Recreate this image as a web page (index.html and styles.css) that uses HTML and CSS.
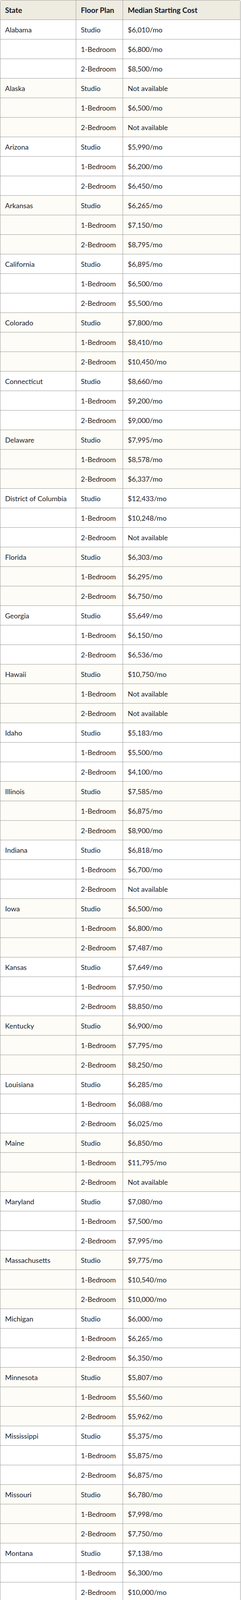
FILE: index.html
```html
<!DOCTYPE html>
<html lang="en">
<head>
<meta charset="utf-8">
<title>Median Starting Cost by State</title>
<link rel="stylesheet" href="styles.css">
</head>
<body>
<table class="cost-table">
<thead>
<tr><th class="c-state">State</th><th class="c-plan">Floor Plan</th><th class="c-cost">Median Starting Cost</th></tr>
</thead>
<tbody>
<tr><td>Alabama</td><td>Studio</td><td>$6,010/mo</td></tr>
<tr><td></td><td>1-Bedroom</td><td>$6,800/mo</td></tr>
<tr><td></td><td>2-Bedroom</td><td>$8,500/mo</td></tr>
<tr class="alt"><td>Alaska</td><td>Studio</td><td>Not available</td></tr>
<tr class="alt"><td></td><td>1-Bedroom</td><td>$6,500/mo</td></tr>
<tr class="alt"><td></td><td>2-Bedroom</td><td>Not available</td></tr>
<tr><td>Arizona</td><td>Studio</td><td>$5,990/mo</td></tr>
<tr><td></td><td>1-Bedroom</td><td>$6,200/mo</td></tr>
<tr><td></td><td>2-Bedroom</td><td>$6,450/mo</td></tr>
<tr class="alt"><td>Arkansas</td><td>Studio</td><td>$6,265/mo</td></tr>
<tr class="alt"><td></td><td>1-Bedroom</td><td>$7,150/mo</td></tr>
<tr class="alt"><td></td><td>2-Bedroom</td><td>$8,795/mo</td></tr>
<tr><td>California</td><td>Studio</td><td>$6,895/mo</td></tr>
<tr><td></td><td>1-Bedroom</td><td>$6,500/mo</td></tr>
<tr><td></td><td>2-Bedroom</td><td>$5,500/mo</td></tr>
<tr class="alt"><td>Colorado</td><td>Studio</td><td>$7,800/mo</td></tr>
<tr class="alt"><td></td><td>1-Bedroom</td><td>$8,410/mo</td></tr>
<tr class="alt"><td></td><td>2-Bedroom</td><td>$10,450/mo</td></tr>
<tr><td>Connecticut</td><td>Studio</td><td>$8,660/mo</td></tr>
<tr><td></td><td>1-Bedroom</td><td>$9,200/mo</td></tr>
<tr><td></td><td>2-Bedroom</td><td>$9,000/mo</td></tr>
<tr class="alt"><td>Delaware</td><td>Studio</td><td>$7,995/mo</td></tr>
<tr class="alt"><td></td><td>1-Bedroom</td><td>$8,578/mo</td></tr>
<tr class="alt"><td></td><td>2-Bedroom</td><td>$6,337/mo</td></tr>
<tr><td>District of Columbia</td><td>Studio</td><td>$12,433/mo</td></tr>
<tr><td></td><td>1-Bedroom</td><td>$10,248/mo</td></tr>
<tr><td></td><td>2-Bedroom</td><td>Not available</td></tr>
<tr class="alt"><td>Florida</td><td>Studio</td><td>$6,303/mo</td></tr>
<tr class="alt"><td></td><td>1-Bedroom</td><td>$6,295/mo</td></tr>
<tr class="alt"><td></td><td>2-Bedroom</td><td>$6,750/mo</td></tr>
<tr><td>Georgia</td><td>Studio</td><td>$5,649/mo</td></tr>
<tr><td></td><td>1-Bedroom</td><td>$6,150/mo</td></tr>
<tr><td></td><td>2-Bedroom</td><td>$6,536/mo</td></tr>
<tr class="alt"><td>Hawaii</td><td>Studio</td><td>$10,750/mo</td></tr>
<tr class="alt"><td></td><td>1-Bedroom</td><td>Not available</td></tr>
<tr class="alt"><td></td><td>2-Bedroom</td><td>Not available</td></tr>
<tr><td>Idaho</td><td>Studio</td><td>$5,183/mo</td></tr>
<tr><td></td><td>1-Bedroom</td><td>$5,500/mo</td></tr>
<tr><td></td><td>2-Bedroom</td><td>$4,100/mo</td></tr>
<tr class="alt"><td>Illinois</td><td>Studio</td><td>$7,585/mo</td></tr>
<tr class="alt"><td></td><td>1-Bedroom</td><td>$6,875/mo</td></tr>
<tr class="alt"><td></td><td>2-Bedroom</td><td>$8,900/mo</td></tr>
<tr><td>Indiana</td><td>Studio</td><td>$6,818/mo</td></tr>
<tr><td></td><td>1-Bedroom</td><td>$6,700/mo</td></tr>
<tr><td></td><td>2-Bedroom</td><td>Not available</td></tr>
<tr class="alt"><td>Iowa</td><td>Studio</td><td>$6,500/mo</td></tr>
<tr class="alt"><td></td><td>1-Bedroom</td><td>$6,800/mo</td></tr>
<tr class="alt"><td></td><td>2-Bedroom</td><td>$7,487/mo</td></tr>
<tr><td>Kansas</td><td>Studio</td><td>$7,649/mo</td></tr>
<tr><td></td><td>1-Bedroom</td><td>$7,950/mo</td></tr>
<tr><td></td><td>2-Bedroom</td><td>$8,850/mo</td></tr>
<tr class="alt"><td>Kentucky</td><td>Studio</td><td>$6,900/mo</td></tr>
<tr class="alt"><td></td><td>1-Bedroom</td><td>$7,795/mo</td></tr>
<tr class="alt"><td></td><td>2-Bedroom</td><td>$8,250/mo</td></tr>
<tr><td>Louisiana</td><td>Studio</td><td>$6,285/mo</td></tr>
<tr><td></td><td>1-Bedroom</td><td>$6,088/mo</td></tr>
<tr><td></td><td>2-Bedroom</td><td>$6,025/mo</td></tr>
<tr class="alt"><td>Maine</td><td>Studio</td><td>$6,850/mo</td></tr>
<tr class="alt"><td></td><td>1-Bedroom</td><td>$11,795/mo</td></tr>
<tr class="alt"><td></td><td>2-Bedroom</td><td>Not available</td></tr>
<tr><td>Maryland</td><td>Studio</td><td>$7,080/mo</td></tr>
<tr><td></td><td>1-Bedroom</td><td>$7,500/mo</td></tr>
<tr><td></td><td>2-Bedroom</td><td>$7,995/mo</td></tr>
<tr class="alt"><td>Massachusetts</td><td>Studio</td><td>$9,775/mo</td></tr>
<tr class="alt"><td></td><td>1-Bedroom</td><td>$10,540/mo</td></tr>
<tr class="alt"><td></td><td>2-Bedroom</td><td>$10,000/mo</td></tr>
<tr><td>Michigan</td><td>Studio</td><td>$6,000/mo</td></tr>
<tr><td></td><td>1-Bedroom</td><td>$6,265/mo</td></tr>
<tr><td></td><td>2-Bedroom</td><td>$6,350/mo</td></tr>
<tr class="alt"><td>Minnesota</td><td>Studio</td><td>$5,807/mo</td></tr>
<tr class="alt"><td></td><td>1-Bedroom</td><td>$5,560/mo</td></tr>
<tr class="alt"><td></td><td>2-Bedroom</td><td>$5,962/mo</td></tr>
<tr><td>Mississippi</td><td>Studio</td><td>$5,375/mo</td></tr>
<tr><td></td><td>1-Bedroom</td><td>$5,875/mo</td></tr>
<tr><td></td><td>2-Bedroom</td><td>$6,875/mo</td></tr>
<tr class="alt"><td>Missouri</td><td>Studio</td><td>$6,780/mo</td></tr>
<tr class="alt"><td></td><td>1-Bedroom</td><td>$7,998/mo</td></tr>
<tr class="alt"><td></td><td>2-Bedroom</td><td>$7,750/mo</td></tr>
<tr><td>Montana</td><td>Studio</td><td>$7,138/mo</td></tr>
<tr><td></td><td>1-Bedroom</td><td>$6,300/mo</td></tr>
<tr><td></td><td>2-Bedroom</td><td>$10,000/mo</td></tr>
<tr class="alt"><td>Nebraska</td><td>Studio</td><td>$7,649/mo</td></tr>
<tr class="alt"><td></td><td>1-Bedroom</td><td>$7,758/mo</td></tr>
<tr class="alt"><td></td><td>2-Bedroom</td><td>$8,641/mo</td></tr>
<tr><td>Nevada</td><td>Studio</td><td>$6,778/mo</td></tr>
<tr><td></td><td>1-Bedroom</td><td>$6,788/mo</td></tr>
<tr><td></td><td>2-Bedroom</td><td>$8,269/mo</td></tr>
<tr class="alt"><td>New Hampshire</td><td>Studio</td><td>$8,550/mo</td></tr>
<tr class="alt"><td></td><td>1-Bedroom</td><td>$8,500/mo</td></tr>
<tr class="alt"><td></td><td>2-Bedroom</td><td>$8,755/mo</td></tr>
<tr><td>New Jersey</td><td>Studio</td><td>$6,905/mo</td></tr>
<tr><td></td><td>1-Bedroom</td><td>$6,905/mo</td></tr>
<tr><td></td><td>2-Bedroom</td><td>$10,205/mo</td></tr>
<tr class="alt"><td>New Mexico</td><td>Studio</td><td>$6,275/mo</td></tr>
<tr class="alt"><td></td><td>1-Bedroom</td><td>$6,850/mo</td></tr>
<tr class="alt"><td></td><td>2-Bedroom</td><td>$12,525/mo</td></tr>
<tr><td>New York</td><td>Studio</td><td>$9,150/mo</td></tr>
<tr><td></td><td>1-Bedroom</td><td>$11,450/mo</td></tr>
<tr><td></td><td>2-Bedroom</td><td>$7,508/mo</td></tr>
<tr class="alt"><td>North Carolina</td><td>Studio</td><td>$7,710/mo</td></tr>
<tr class="alt"><td></td><td>1-Bedroom</td><td>$8,200/mo</td></tr>
<tr class="alt"><td></td><td>2-Bedroom</td><td>$8,700/mo</td></tr>
<tr><td>North Dakota</td><td>Studio</td><td>$5,220/mo</td></tr>
<tr><td></td><td>1-Bedroom</td><td>Not available</td></tr>
<tr><td></td><td>2-Bedroom</td><td>Not available</td></tr>
<tr class="alt"><td>Ohio</td><td>Studio</td><td>$6,708/mo</td></tr>
<tr class="alt"><td></td><td>1-Bedroom</td><td>$6,995/mo</td></tr>
<tr class="alt"><td></td><td>2-Bedroom</td><td>$9,200/mo</td></tr>
<tr><td>Oklahoma</td><td>Studio</td><td>$6,553/mo</td></tr>
<tr><td></td><td>1-Bedroom</td><td>$7,000/mo</td></tr>
<tr><td></td><td>2-Bedroom</td><td>$6,500/mo</td></tr>
<tr class="alt"><td>Oregon</td><td>Studio</td><td>$7,925/mo</td></tr>
<tr class="alt"><td></td><td>1-Bedroom</td><td>$6,500/mo</td></tr>
<tr class="alt"><td></td><td>2-Bedroom</td><td>$6,383/mo</td></tr>
<tr><td>Pennsylvania</td><td>Studio</td><td>$7,069/mo</td></tr>
<tr><td></td><td>1-Bedroom</td><td>$6,290/mo</td></tr>
<tr><td></td><td>2-Bedroom</td><td>$6,850/mo</td></tr>
<tr class="alt"><td>Rhode Island</td><td>Studio</td><td>$7,005/mo</td></tr>
<tr class="alt"><td></td><td>1-Bedroom</td><td>$7,950/mo</td></tr>
<tr class="alt"><td></td><td>2-Bedroom</td><td>$10,500/mo</td></tr>
<tr><td>South Carolina</td><td>Studio</td><td>$6,079/mo</td></tr>
<tr><td></td><td>1-Bedroom</td><td>$6,068/mo</td></tr>
<tr><td></td><td>2-Bedroom</td><td>$8,025/mo</td></tr>
<tr class="alt"><td>South Dakota</td><td>Studio</td><td>$6,822/mo</td></tr>
<tr class="alt"><td></td><td>1-Bedroom</td><td>Not available</td></tr>
<tr class="alt"><td></td><td>2-Bedroom</td><td>Not available</td></tr>
<tr><td>Tennessee</td><td>Studio</td><td>$6,138/mo</td></tr>
<tr><td></td><td>1-Bedroom</td><td>$7,000/mo</td></tr>
<tr><td></td><td>2-Bedroom</td><td>$8,885/mo</td></tr>
<tr class="alt"><td>Texas</td><td>Studio</td><td>$6,310/mo</td></tr>
<tr class="alt"><td></td><td>1-Bedroom</td><td>$6,875/mo</td></tr>
<tr class="alt"><td></td><td>2-Bedroom</td><td>$7,570/mo</td></tr>
<tr><td>Utah</td><td>Studio</td><td>$5,600/mo</td></tr>
<tr><td></td><td>1-Bedroom</td><td>$6,215/mo</td></tr>
<tr><td></td><td>2-Bedroom</td><td>$7,200/mo</td></tr>
<tr class="alt"><td>Vermont</td><td>Studio</td><td>$12,380/mo</td></tr>
<tr class="alt"><td></td><td>1-Bedroom</td><td>$12,025/mo</td></tr>
<tr class="alt"><td></td><td>2-Bedroom</td><td>Not available</td></tr>
<tr><td>Virginia</td><td>Studio</td><td>$7,470/mo</td></tr>
<tr><td></td><td>1-Bedroom</td><td>$6,053/mo</td></tr>
<tr><td></td><td>2-Bedroom</td><td>$8,903/mo</td></tr>
<tr class="alt"><td>Washington</td><td>Studio</td><td>$6,975/mo</td></tr>
<tr class="alt"><td></td><td>1-Bedroom</td><td>$7,500/mo</td></tr>
<tr class="alt"><td></td><td>2-Bedroom</td><td>$8,000/mo</td></tr>
<tr><td>West Virginia</td><td>Studio</td><td>$7,100/mo</td></tr>
<tr><td></td><td>1-Bedroom</td><td>$7,870/mo</td></tr>
<tr><td></td><td>2-Bedroom</td><td>Not available</td></tr>
<tr class="alt"><td>Wisconsin</td><td>Studio</td><td>$6,200/mo</td></tr>
<tr class="alt"><td></td><td>1-Bedroom</td><td>$6,750/mo</td></tr>
<tr class="alt"><td></td><td>2-Bedroom</td><td>$7,800/mo</td></tr>
<tr><td>Wyoming</td><td>Studio</td><td>$5,988/mo</td></tr>
<tr><td></td><td>1-Bedroom</td><td>$3,875/mo</td></tr>
<tr><td></td><td>2-Bedroom</td><td>Not available</td></tr>
</tbody>
</table>
</body>
</html>
```

FILE: styles.css
```css
html, body {
  margin: 0;
  padding: 0;
  background: #ffffff;
}

body {
  font-family: Lato, "Noto Sans", "Liberation Sans", sans-serif;
  color: #1c1e2b;
}

.cost-table {
  width: 616px;
  border: 1px solid #9a9a9a;
  border-radius: 4px;
  border-collapse: separate;
  border-spacing: 0;
  table-layout: fixed;
}

.cost-table th,
.cost-table td {
  padding: 0 12px;
  box-sizing: border-box;
  border-right: 1px solid #9a9a9a;
  border-bottom: 1px solid #9a9a9a;
  text-align: left;
  vertical-align: middle;
  white-space: nowrap;
  line-height: 22px;
}

.cost-table th:last-child,
.cost-table td:last-child {
  border-right: none;
}

.cost-table th {
  height: 50px;
  background: #eeebe0;
  font-weight: 700;
  font-size: 19px;
  color: #141622;
}

.cost-table th:first-child { border-top-left-radius: 3px; }
.cost-table th:last-child { border-top-right-radius: 3px; }

.cost-table td {
  height: 50px;
  font-size: 18px;
  font-weight: 400;
}

.cost-table tbody tr:last-child td {
  border-bottom: none;
  height: 48px;
}

.cost-table tbody tr:last-child td:first-child { border-bottom-left-radius: 3px; }
.cost-table tbody tr:last-child td:last-child { border-bottom-right-radius: 3px; }

.c-state { width: 194px; }
.c-plan { width: 120px; }

.cost-table tr.alt td {
  background: #fdfcf6;
}
```
